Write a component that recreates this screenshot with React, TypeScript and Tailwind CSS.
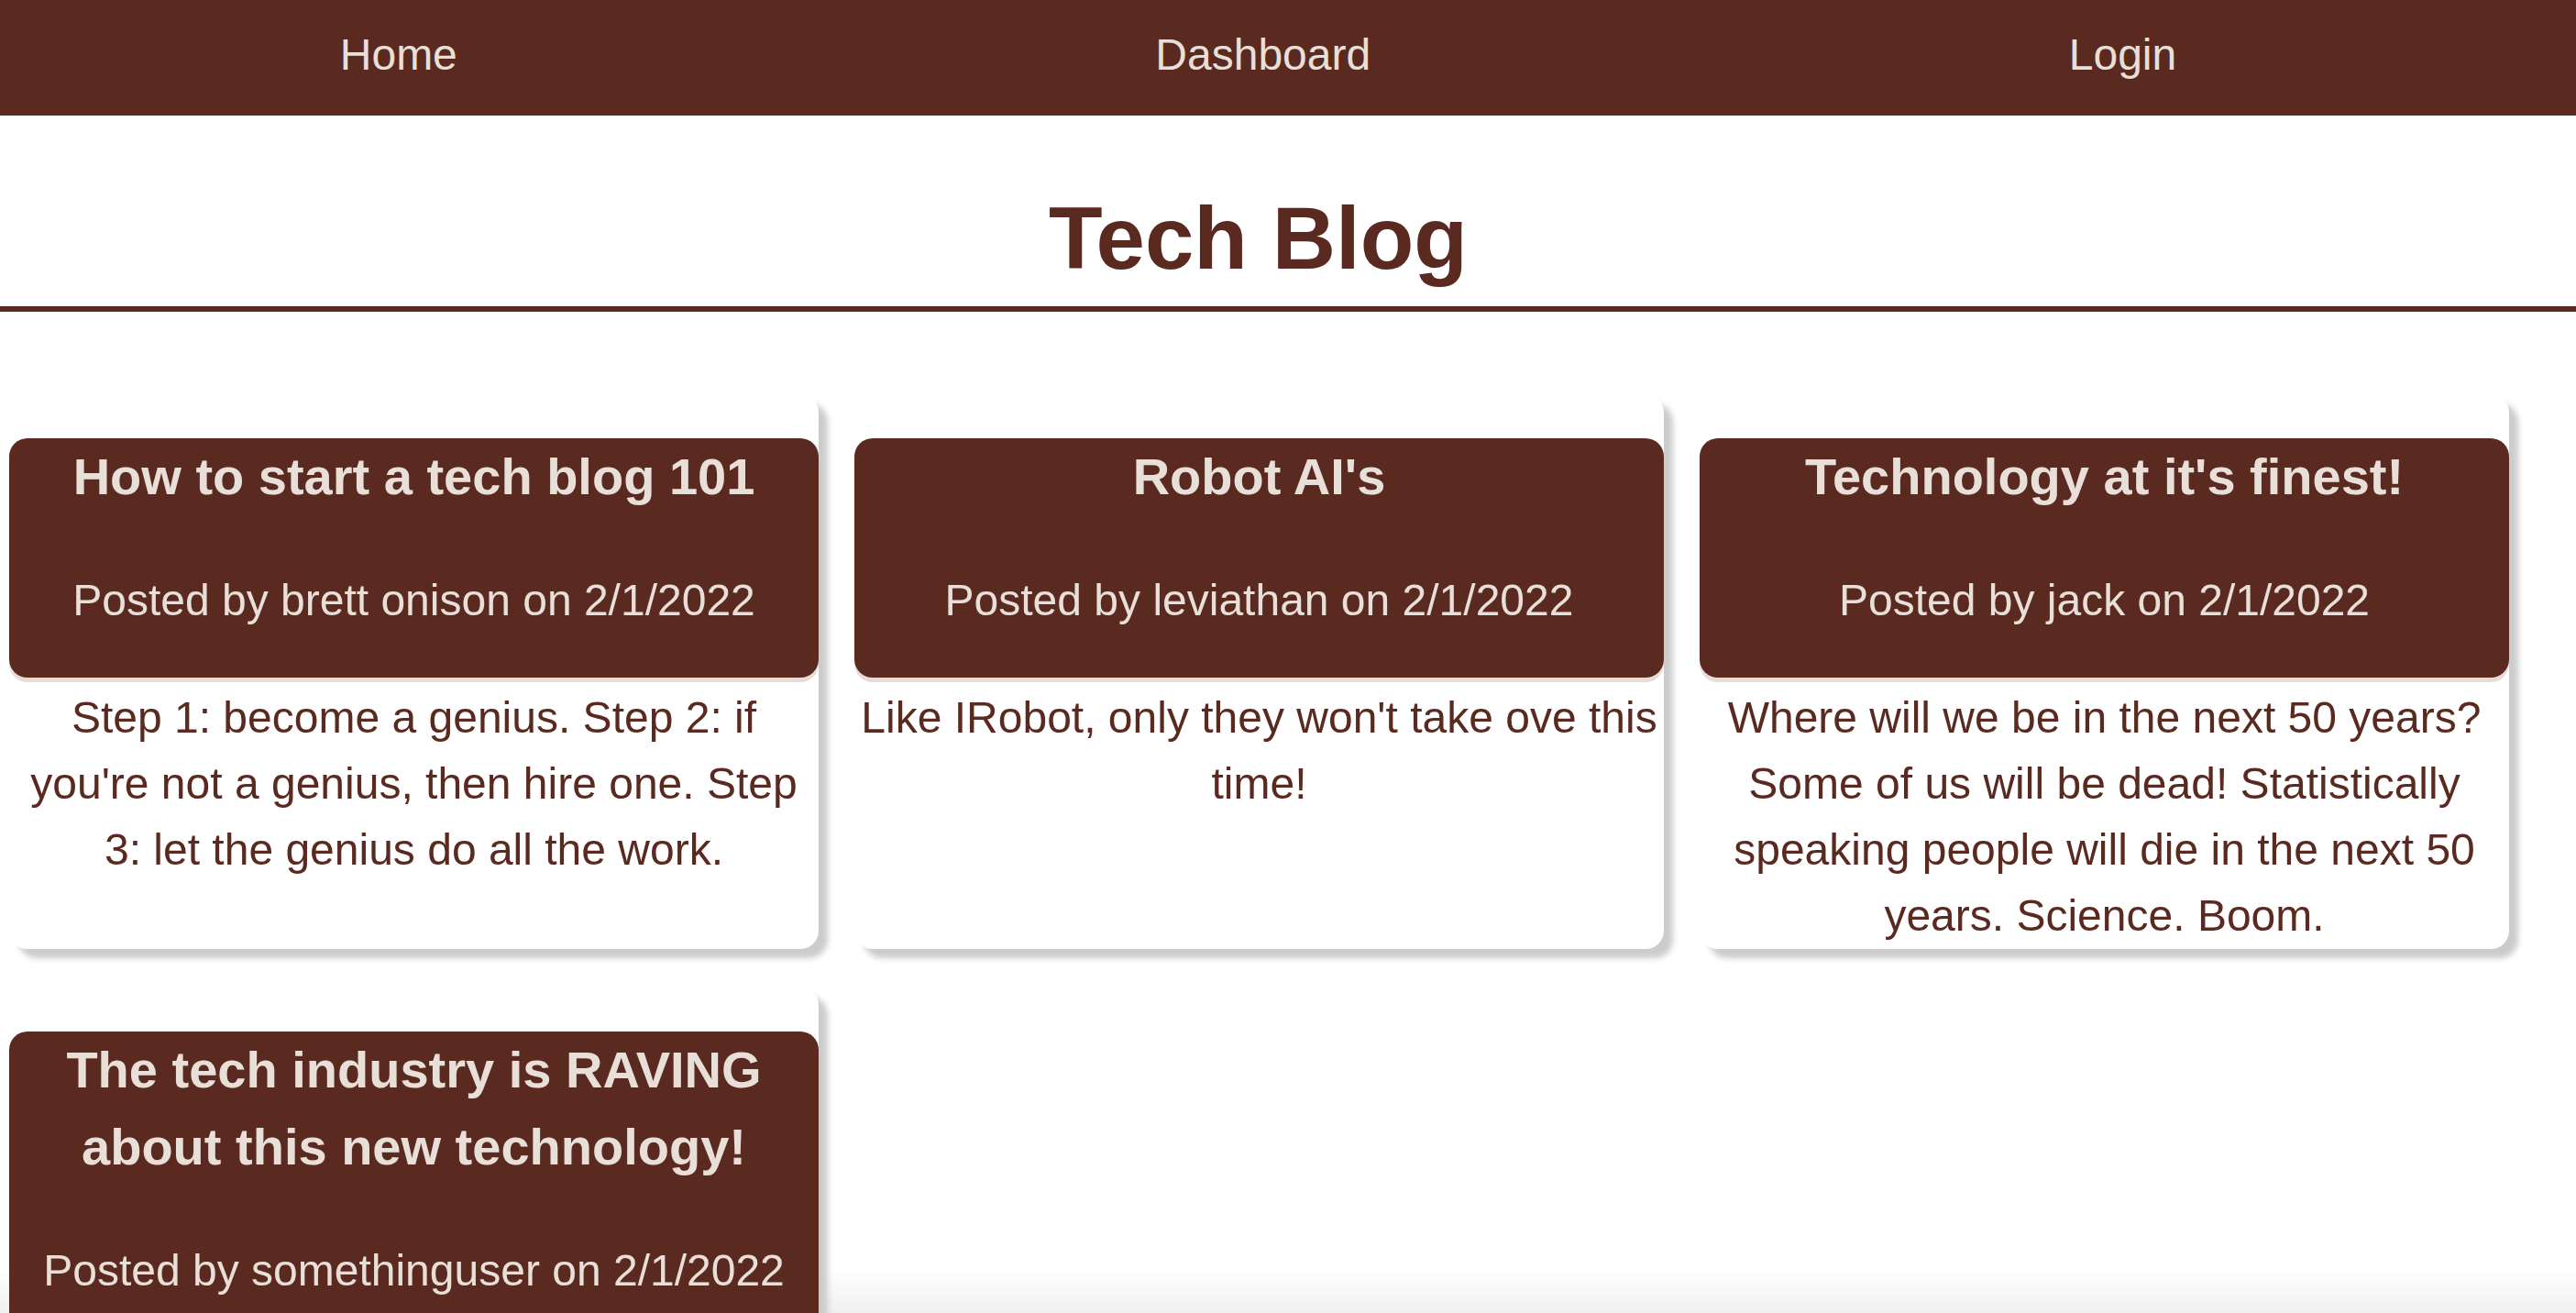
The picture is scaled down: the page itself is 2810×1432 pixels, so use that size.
import React from "react";

type Post = { title: string; author: string; body: string };

const posts: Post[] = [
  {
    title: "How to start a tech blog 101",
    author: "brett onison",
    body: "Step 1: become a genius. Step 2: if you're not a genius, then hire one. Step 3: let the genius do all the work.",
  },
  {
    title: "Robot AI's",
    author: "leviathan",
    body: "Like IRobot, only they won't take ove this time!",
  },
  {
    title: "Technology at it's finest!",
    author: "jack",
    body: "Where will we be in the next 50 years? Some of us will be dead! Statistically speaking people will die in the next 50 years. Science. Boom.",
  },
  {
    title: "The tech industry is RAVING about this new technology!",
    author: "somethinguser",
    body: "",
  },
];

function Card({ post }: { post: Post }) {
  return (
    <article className="w-[883px] bg-white rounded-[20px] shadow-[10px_10px_6px_#cccccc] pt-[48px] pb-0 flex flex-col">
      <div className="bg-[#5a2920] rounded-[20px] shadow-[0_5px_0_#e6ded6] text-center text-[#e8e0d8] pb-[48px] px-[5px]">
        <h2 className="text-[56px] font-bold leading-[84px]">{post.title}</h2>
        <p className="text-[48px] leading-[72px] mt-[57px]">
          Posted by {post.author} on 2/1/2022
        </p>
      </div>
      <p className="text-[48px] leading-[72px] text-center px-[5px] mt-[8px] text-[#5a2920]">
        {post.body}
      </p>
    </article>
  );
}

export default function App() {
  return (
    <div className="relative min-h-screen text-[#5a2920] font-['Liberation_Sans',Arial,Helvetica,sans-serif]">
      <div className="pointer-events-none fixed inset-x-0 bottom-0 h-[50px] bg-linear-to-b from-[rgba(0,0,0,0)] to-[rgba(0,0,0,0.06)]" />
      <nav className="relative h-[126px] bg-[#5a2920] overflow-hidden">
        <div className="-ml-[10px] w-[2765px] flex justify-around pt-[24px]">
          <a className="text-[48px] leading-[72px] text-[#e8e0d8]">Home</a>
          <a className="text-[48px] leading-[72px] text-[#e8e0d8]">Dashboard</a>
          <a className="text-[48px] leading-[72px] text-[#e8e0d8]">Login</a>
        </div>
      </nav>
      <header className="relative border-b-[6px] border-[#5a2920] pt-[62px] pb-[2px]">
        <h1 className="w-[2745px] text-center text-[96px] font-bold leading-[144px]">
          Tech Blog
        </h1>
      </header>
      <main className="relative z-10 w-[2750px] pl-[10px] pt-[90px] pb-[60px] flex flex-wrap gap-x-[39px] gap-y-[42px]">
        {posts.map((p) => (
          <Card key={p.title} post={p} />
        ))}
      </main>
    </div>
  );
}
